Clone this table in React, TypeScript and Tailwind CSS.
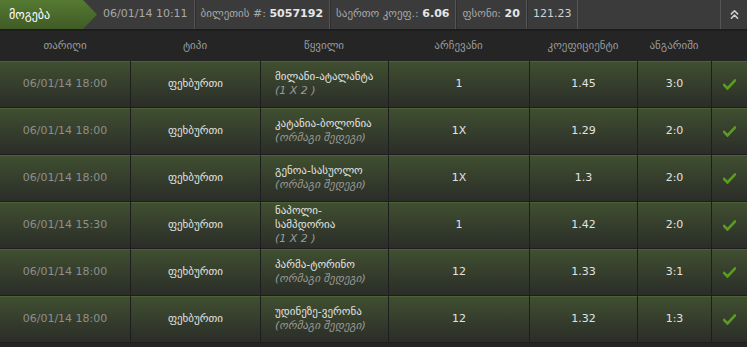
import { ChevronsUp } from "lucide-react";

const rows = [
  { date: "06/01/14 18:00", type: "ფეხბურთი", pair: ["მილანი-ატალანტა"], sub: "(1 X 2 )", pick: "1", odd: "1.45", score: "3:0" },
  { date: "06/01/14 18:00", type: "ფეხბურთი", pair: ["კატანია-ბოლონია"], sub: "(ორმაგი შედეგი)", pick: "1X", odd: "1.29", score: "2:0" },
  { date: "06/01/14 18:00", type: "ფეხბურთი", pair: ["გენოა-სასუოლო"], sub: "(ორმაგი შედეგი)", pick: "1X", odd: "1.3", score: "2:0" },
  { date: "06/01/14 15:30", type: "ფეხბურთი", pair: ["ნაპოლი-", "სამპდორია"], sub: "(1 X 2 )", pick: "1", odd: "1.42", score: "2:0" },
  { date: "06/01/14 18:00", type: "ფეხბურთი", pair: ["პარმა-ტორინო"], sub: "(ორმაგი შედეგი)", pick: "12", odd: "1.33", score: "3:1" },
  { date: "06/01/14 18:00", type: "ფეხბურთი", pair: ["უდინეზე-ვერონა"], sub: "(ორმაგი შედეგი)", pick: "12", odd: "1.32", score: "1:3" },
];

const cols = "grid grid-cols-[130px_130px_128px_141px_108px_74px_36px]";

function Check() {
  return (
    <svg width="13" height="11" viewBox="0 0 13 11">
      <path d="M1 6 L4.5 9.5 L12 1.5" fill="none" stroke="#5b9c1f" strokeWidth="2.6" strokeLinecap="square" />
    </svg>
  );
}

function Seg({ label, value }: { label?: string; value: string }) {
  return (
    <div className="flex h-full items-center border-l border-l-[#555] px-[6px] shadow-[inset_1px_0_0_#2f2f2f]">
      {label ? <span className="text-[#a8a8a8]">{label}&nbsp;</span> : null}
      <span className={label ? "text-[#e6e6e6] font-bold" : "text-[#d0d0d0]"}>{value}</span>
    </div>
  );
}

export default function App() {
  return (
    <div className="w-[747px] h-[347px] overflow-hidden bg-[#252525] text-[11px] font-['DejaVu_Sans',sans-serif]">
      <div className="flex h-[31px] items-stretch bg-[#3b3b3b] border-b-2 border-b-[#1d1d1d]">
        <div className="relative w-[97px] h-full">
          <div className="absolute inset-0 bg-gradient-to-b from-[#567a33] to-[#3f5c25] [clip-path:polygon(0_0,83px_0,97px_50%,83px_100%,0_100%)]" />
          <span className="relative flex h-full items-center pl-[9px] text-[12px] text-white">მოგება</span>
        </div>
        <div className="flex items-center pl-[6px] pr-[6px] text-[#a8a8a8]">06/01/14 10:11</div>
        <Seg label="ბილეთის #:" value="5057192" />
        <Seg label="საერთო კოეფ.:" value="6.06" />
        <Seg label="ფსონი:" value="20" />
        <Seg value="121.23" />
        <div className="flex-1 border-l border-l-[#555]" />
        <div className="flex w-[27px] items-center justify-center border-l border-l-[#555] text-[#cfcfcf]">
          <ChevronsUp size={15} strokeWidth={2.5} />
        </div>
      </div>
      <div className={`${cols} h-[30px] items-center text-center text-[#9a9a9a]`}>
        <div>თარიღი</div>
        <div>ტიპი</div>
        <div>წყვილი</div>
        <div>არჩევანი</div>
        <div>კოეფიციენტი</div>
        <div>ანგარიში</div>
        <div />
      </div>
      {rows.map((r, i) => (
        <div
          key={i}
          className={`${cols} h-[47px] border-b border-b-[#1e1e1e] bg-gradient-to-b from-[#405030] to-[#2b2d28] shadow-[inset_0_1px_0_#4d6138]`}
        >
          <div className="flex items-center justify-center text-[#8e8e8e]">{r.date}</div>
          <div className="flex items-center justify-center border-l border-l-[#1e1e1e] text-[#e2e2e2]">{r.type}</div>
          <div className="flex flex-col justify-center border-l border-l-[#1e1e1e] pl-[14px] leading-[14px]">
            {r.pair.map((p) => (
              <span key={p} className="text-[#e2e2e2]">{p}</span>
            ))}
            <span className="italic text-[#9a9a9a]">{r.sub}</span>
          </div>
          <div className="flex items-center justify-center border-l border-l-[#1e1e1e] text-[#e2e2e2]">{r.pick}</div>
          <div className="flex items-center justify-center border-l border-l-[#1e1e1e] text-[#e2e2e2]">{r.odd}</div>
          <div className="flex items-center justify-center border-l border-l-[#1e1e1e] text-[#e2e2e2]">{r.score}</div>
          <div className="flex items-center justify-center border-l border-l-[#1e1e1e]">
            <Check />
          </div>
        </div>
      ))}
    </div>
  );
}
